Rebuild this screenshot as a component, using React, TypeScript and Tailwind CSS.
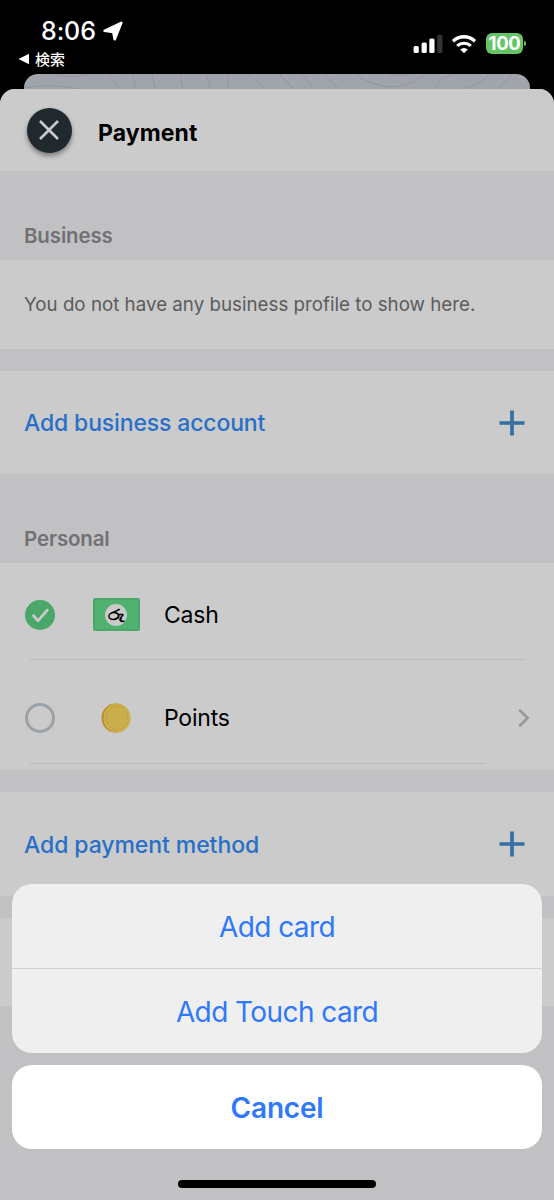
import React from "react";

const StatusBar = () => {
  return (
    <div className="flex h-[74px] justify-between text-white">
      <div className="pt-[19px] pl-[18px]">
        <div className="flex items-center gap-[7px] pl-[23px]">
          <span className="text-[25px] leading-6 font-medium tracking-[-0.1px]">
            8:06
          </span>
          <svg viewBox="0 0 20 20" className="h-5 w-5" fill="white">
            <path
              d="M18.300 1.800 11.700 18.200 10.300 11 1.500 9.800z"
              stroke="white"
              strokeWidth="2.600"
              strokeLinejoin="round"
            />
          </svg>
        </div>
        <div className="mt-[7px] flex items-center gap-[6px]">
          <svg viewBox="0 0 11 12" className="h-3 w-[11px]" fill="white">
            <path d="M.5 6 11 .8v10.400z" />
          </svg>
          <span className="font-['Noto_Sans_CJK_JP',sans-serif] text-[15px] leading-[18px] font-medium">
            検索
          </span>
        </div>
      </div>
      <div className="flex h-[21px] translate-y-[33px] items-center pr-[28px]">
        <svg viewBox="0 0 30 20" className="h-5 w-[30px]" fill="white">
          <rect x="0.600" y="12" width="5.200" height="7" rx="1.5" />
          <rect x="8.600" y="8.5" width="5.200" height="10.5" rx="1.5" />
          <rect x="16.300" y="4.5" width="5.200" height="14.500" rx="1.5" />
          <rect x="24.200" y=".8" width="5.200" height="18.200" rx="1.5" fill="#333" />
        </svg>
        <svg viewBox="0 0 26 20" className="ml-[8px] h-5 w-[26px]" fill="none">
          <path d="M2 7.200a16 16 0 0 1 22 0" stroke="white" strokeWidth="3.400" />
          <path d="M6.200 11.900a10 10 0 0 1 13.600 0" stroke="white" strokeWidth="3.200" />
          <path d="M13 19.200 9.200 15.500a5.300 5.300 0 0 1 7.600 0z" fill="white" />
        </svg>
        <div className="ml-[9px] flex h-[21px] w-[37px] items-center justify-center rounded-[6px] bg-[#64c466] text-[18.500px] leading-none font-bold tracking-[-0.3px]">
          100
        </div>
        <div className="ml-[1px] h-[5px] w-[2px] rounded-r-full bg-[#64c466]" />
      </div>
    </div>
  );
};

const MapPeek = () => {
  return (
    <div className="mx-6 h-[15px] overflow-hidden rounded-t-[14px] bg-[#a0a5ac]">
      <svg
        viewBox="0 0 506 15"
        className="h-[15px] w-[506px]"
        fill="none"
        stroke="#92979e"
        strokeWidth="1"
      >
        <path d="M30 0q16 5 34 0M0 14q25-5 55 1M84 0l12 15M109 0l3 15M128 0l3 15M156 0l3 15M182 0l4 15M204 0v15M223 0l19 15" />
        <path d="M255 0l15 15M278 0l12 15M299 0l16 15M330 0q38 24 68 3l4-3M365 0q8 3 20 0M411 15q5-12 20-15M439 15q20-7 27-15M474 15l14-15" />
      </svg>
    </div>
  );
};

const Plus = () => {
  return (
    <svg viewBox="0 0 26 26" className="h-[26px] w-[26px]" stroke="#366fa3" strokeWidth="3.700">
      <path d="M13 .5v25M.5 13h25" />
    </svg>
  );
};

const SectionTitle = ({ children }: { children: React.ReactNode }) => {
  return (
    <h2 className="flex h-[89px] items-end bg-[#c1c1c3] px-6 pb-[12px] text-[20.500px] leading-6 font-semibold tracking-[-0.15px] text-[#717175]">
      {children}
    </h2>
  );
};

const Cash = () => {
  return (
    <div className="flex h-[33px] w-[47px] items-center justify-center rounded-[2px] border-2 border-[#4aa769] bg-[#51b26f]">
      <div className="flex h-[22px] w-[22px] items-center justify-center rounded-full bg-[#cbcbcb] text-[14px] leading-none font-bold text-black">
        <span className="scale-x-140">රු</span>
      </div>
    </div>
  );
};

const Coin = () => {
  return (
    <svg viewBox="0 0 30 30" className="h-[30px] w-[30px]">
      <ellipse cx="14" cy="15" rx="13.500" ry="14.500" fill="#b98f2f" />
      <ellipse cx="16" cy="15" rx="13.500" ry="14.500" fill="#c9ae4b" />
      <ellipse
        cx="16"
        cy="15"
        rx="10.500"
        ry="11.500"
        fill="none"
        stroke="#b99a3a"
        strokeWidth="1"
        strokeDasharray="2 2"
      />
    </svg>
  );
};

const App = () => {
  return (
    <div className="relative flex h-[1200px] w-[554px] flex-col overflow-hidden bg-black font-[Inter,sans-serif]">
      <StatusBar />
      <MapPeek />
      <main className="flex-1 overflow-hidden rounded-t-[15px] bg-[#c1c1c3]">
        <header className="flex h-[82px] items-center bg-[#cbcbcb] pl-[27px]">
          <button className="flex h-[45px] w-[45px] items-center justify-center rounded-full bg-[#20292e] pr-[1px] shadow-[0_3px_5px_rgba(0,0,0,0.4)]">
            <svg viewBox="0 0 20 20" className="h-5 w-5" stroke="#cbcbcb" strokeWidth="2.600">
              <path d="M1 1l18 18M19 1 1 19" />
            </svg>
          </button>
          <h1 className="mt-[5px] ml-[26px] text-[23px] leading-7 font-bold tracking-[0.1px] text-black">
            Payment
          </h1>
        </header>

        <SectionTitle>Business</SectionTitle>
        <div className="flex h-[89px] items-center bg-[#cbcbcb] px-6 pt-[1px] text-[18.750px] whitespace-nowrap text-[#5c5c5c]">
          You do not have any business profile to show here.
        </div>
        <div className="mt-[22px] flex h-[103px] items-center justify-between bg-[#cbcbcb] pr-[29px] pl-6 text-[23px] font-medium tracking-[-0.150px] text-[#286fc8]">
          <span className="pt-[2px]">Add business account</span>
          <Plus />
        </div>

        <SectionTitle>Personal</SectionTitle>
        <ul className="h-[207px] bg-[#cbcbcb] text-[23px] tracking-[-0.2px] text-black">
          <li>
            <div className="flex h-[96px] items-center pt-[7px] pl-[25px]">
              <svg viewBox="0 0 30 30" className="h-[30px] w-[30px]" fill="none">
                <circle cx="15" cy="15" r="15" fill="#4aa769" />
                <path
                  d="m8.500 15.800 4.600 4.900 9.200-10.500"
                  stroke="#cbcbcb"
                  strokeWidth="2.800"
                  strokeLinecap="round"
                  strokeLinejoin="round"
                />
              </svg>
              <div className="flex w-[109px] justify-center pr-[1px] pl-[14px]">
                <Cash />
              </div>
              <span className="pt-[2px]">Cash</span>
            </div>
            <div className="mr-[30px] ml-[30px] h-px bg-[#bababb]" />
          </li>
          <li>
            <div className="flex h-[103px] items-center pt-[13px] pr-[24px] pl-[25px]">
              <div className="h-[30px] w-[30px] rounded-full border-3 border-[#9ca1a5]" />
              <div className="flex w-[109px] justify-center pl-[13px]">
                <Coin />
              </div>
              <span className="pt-[1px]">Points</span>
              <svg viewBox="0 0 12 18" className="ml-auto h-[18px] w-3" fill="none">
                <path
                  d="m2 1.500 7.700 7.500L2 16.500"
                  stroke="#999"
                  strokeWidth="2.600"
                  strokeLinecap="round"
                />
              </svg>
            </div>
            <div className="mr-[68px] ml-[30px] h-px bg-[#bababb]" />
          </li>
        </ul>
        <div className="mt-[22px] flex h-[104px] items-center justify-between bg-[#cbcbcb] pr-[29px] pl-6 text-[23px] font-medium tracking-[-0.080px] text-[#286fc8]">
          <span className="pt-[2px]">Add payment method</span>
          <Plus />
        </div>
        <div className="mt-[22px] h-[88px] bg-[#cbcbcb]" />
      </main>

      {/* Action sheet */}
      <div className="absolute inset-x-3 bottom-0 flex flex-col items-center text-[28px] tracking-[-0.580px] text-[#2f78fb]">
        <div className="w-full overflow-hidden rounded-[20px] bg-[#efeff0]">
          <button className="flex h-[84px] w-full items-center justify-center pt-[2px]">
            Add card
          </button>
          <div className="h-px bg-[#cfcfd1]" />
          <button className="flex h-[84px] w-full items-center justify-center pt-[2px]">
            Add Touch card
          </button>
        </div>
        <button className="mt-3 flex h-[84px] w-full items-center justify-center rounded-[20px] bg-white pt-[2px] font-semibold tracking-[-0.2px]">
          Cancel
        </button>
        <div className="mt-[31px] mb-[12px] h-[8px] w-[198px] rounded-full bg-black" />
      </div>
    </div>
  );
};

export default App;
